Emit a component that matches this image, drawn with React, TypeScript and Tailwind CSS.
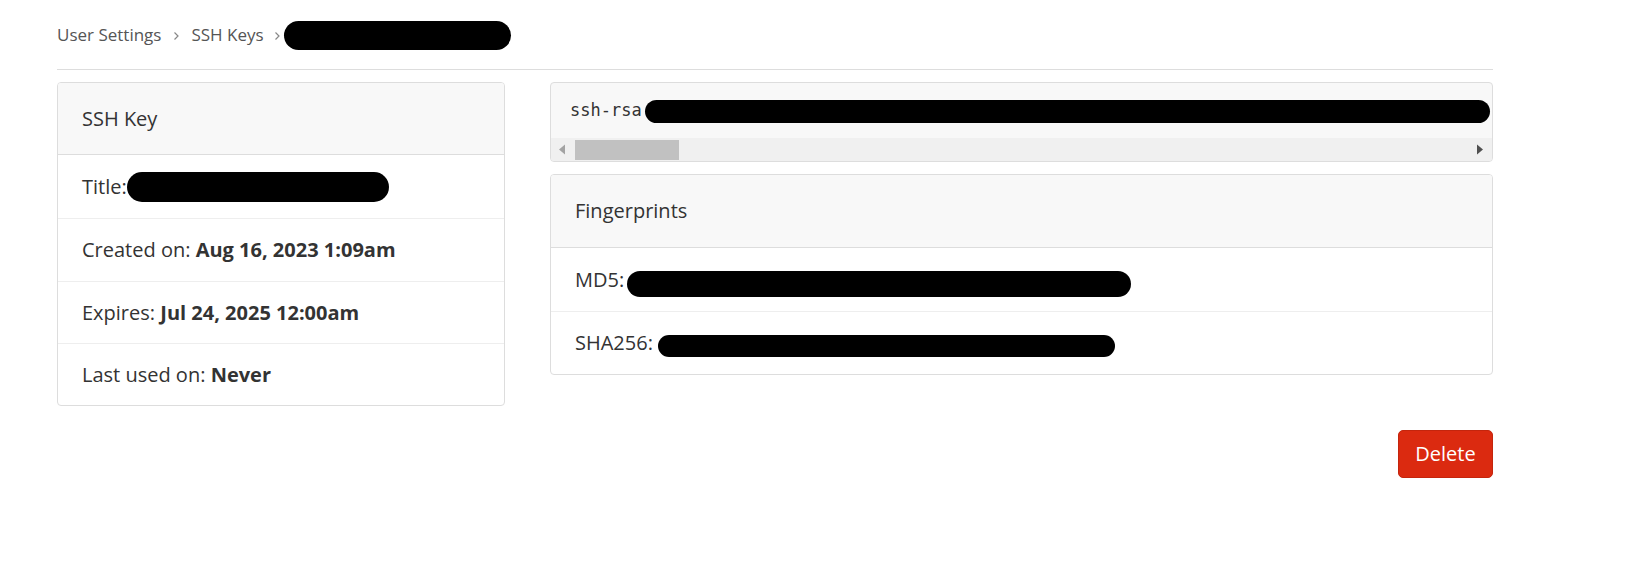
import React from 'react';

// Redacted values are shown as black marker strokes, like in the screenshot
const Redacted: React.FC<{ className: string }> = ({ className }) => (
  <span className={`inline-block bg-black rounded-full ${className}`} />
);

const Chevron: React.FC<{ className: string }> = ({ className }) => (
  <svg width="10" height="10" viewBox="0 0 10 10" className={className}>
    <path d="M3.5 1.5 L7 5 L3.5 8.5" fill="none" stroke="#888" strokeWidth="1.2" />
  </svg>
);

const InfoRow: React.FC<{ children: React.ReactNode; h: string; first?: boolean }> = ({ children, h, first }) => (
  <div className={`${h} flex items-center px-[24px] ${first ? '' : 'border-t border-[#eeeeee]'}`}>
    {children}
  </div>
);

const App: React.FC = () => {
  return (
    <div className="min-h-[565px] bg-white text-[#333] font-['Open_Sans','Noto_Sans',sans-serif]">
      <div className="ml-[57px] w-[1436px] pt-[20px]">
        {/* Breadcrumb */}
        <div className="h-[30px] flex items-center text-[17px] text-[#555]">
          <span>User Settings</span>
          <Chevron className="mx-[10px] mt-[1px]" />
          <span>SSH Keys</span>
          <Chevron className="ml-[8px] mr-[2px] mt-[1px]" />
          <Redacted className="w-[227px] h-[29px] rounded-[12px]" />
        </div>

        <div className="mt-[19px] border-t border-[#dddddd]" />

        <div className="mt-[12px] flex items-start gap-[45px] text-[20px]">
          {/* SSH key details */}
          <div className="w-[448px] border border-[#dddddd] rounded-[4px] overflow-hidden">
            <div className="h-[72px] flex items-center px-[24px] bg-[#f8f8f8] border-b border-[#dddddd]">
              SSH Key
            </div>
            <InfoRow first h="h-[63px]">
              <span>Title:</span>
              <Redacted className="w-[262px] h-[30px] rounded-[12px]" />
            </InfoRow>
            <InfoRow h="h-[63px]">
              <span>
                Created on: <b className="font-bold">Aug 16, 2023 1:09am</b>
              </span>
            </InfoRow>
            <InfoRow h="h-[62px]">
              <span>
                Expires: <b className="font-bold">Jul 24, 2025 12:00am</b>
              </span>
            </InfoRow>
            <InfoRow h="h-[62px]">
              <span>
                Last used on: <b className="font-bold">Never</b>
              </span>
            </InfoRow>
          </div>

          <div className="flex-1 flex flex-col gap-[12px]">
            {/* Public key */}
            <div className="border border-[#dddddd] rounded-[4px] bg-[#f8f8f8] overflow-hidden">
              <div className="h-[55px] flex items-center pl-[19px] whitespace-nowrap overflow-hidden font-['DejaVu_Sans_Mono',monospace] text-[17px]">
                <span>ssh-rsa</span>
                <Redacted className="w-[845px] h-[23px] ml-[3px] mt-[2px] shrink-0" />
              </div>
              <div className="h-[23px] flex items-center bg-[#f0f0f0]">
                <svg width="24" height="23" viewBox="0 0 24 23">
                  <path d="M8 11.5 L14 6.5 L14 16.5 Z" fill="#a3a3a3" />
                </svg>
                <div className="w-[104px] h-[20px] bg-[#c1c1c1]" />
                <div className="flex-1" />
                <svg width="24" height="23" viewBox="0 0 24 23">
                  <path d="M9 6.5 L15 11.5 L9 16.5 Z" fill="#505050" />
                </svg>
              </div>
            </div>

            {/* Fingerprints */}
            <div className="border border-[#dddddd] rounded-[4px] overflow-hidden">
              <div className="h-[73px] flex items-center px-[24px] bg-[#f8f8f8] border-b border-[#dddddd]">
                Fingerprints
              </div>
              <InfoRow first h="h-[63px]">
                <span>MD5:</span>
                <Redacted className="w-[504px] h-[26px] ml-[3px] mt-[8px] rounded-[12px]" />
              </InfoRow>
              <InfoRow h="h-[63px]">
                <span>SHA256:</span>
                <Redacted className="w-[457px] h-[22px] ml-[5px] mt-[6px]" />
              </InfoRow>
            </div>
          </div>
        </div>

        <div className="mt-[24px] flex justify-end">
          <button className="w-[95px] h-[48px] rounded-[5px] bg-[#db2a10] border border-[#c4250d] text-white text-[20px]">
            Delete
          </button>
        </div>
      </div>
    </div>
  );
};

export default App;
